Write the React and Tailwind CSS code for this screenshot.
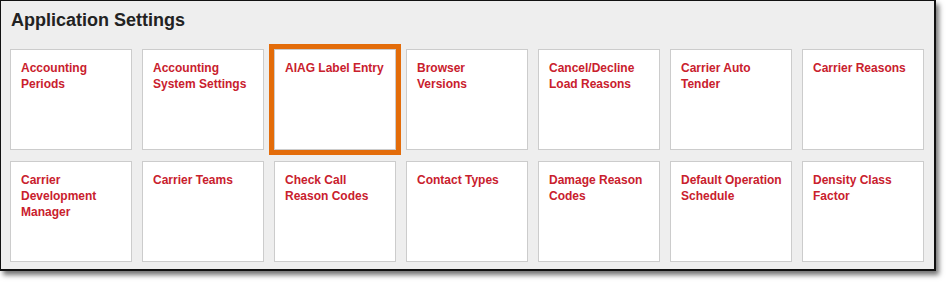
const settings = [
  "Accounting Periods",
  "Accounting System Settings",
  "AIAG Label Entry",
  "Browser Versions",
  "Cancel/Decline Load Reasons",
  "Carrier Auto Tender",
  "Carrier Reasons",
  "Carrier Development Manager",
  "Carrier Teams",
  "Check Call Reason Codes",
  "Contact Types",
  "Damage Reason Codes",
  "Default Operation Schedule",
  "Density Class Factor",
];

// manual breaks so the wrapping matches the screen
const labels = {
  "Accounting Periods": ["Accounting", "Periods"],
  "Accounting System Settings": ["Accounting", "System Settings"],
  "Browser Versions": ["Browser", "Versions"],
  "Cancel/Decline Load Reasons": ["Cancel/Decline", "Load Reasons"],
  "Carrier Auto Tender": ["Carrier Auto", "Tender"],
  "Carrier Development Manager": ["Carrier", "Development", "Manager"],
  "Check Call Reason Codes": ["Check Call", "Reason Codes"],
  "Damage Reason Codes": ["Damage Reason", "Codes"],
  "Default Operation Schedule": ["Default Operation", "Schedule"],
  "Density Class Factor": ["Density Class", "Factor"],
};

function SettingCard({ name, highlighted }) {
  const lines = labels[name] ?? [name];
  return (
    <div
      className={`h-[101px] bg-white border border-[#cccccc] p-2.5 ${
        highlighted ? "outline-[5px] outline-solid outline-[#e36c0a]" : ""
      }`}
    >
      <a className="block text-[12px] leading-4 font-bold text-[#c9202d] cursor-pointer">
        {lines.map((l, i) => (
          <span key={i} className="block whitespace-nowrap">
            {l}
          </span>
        ))}
      </a>
    </div>
  );
}

export default function App() {
  return (
    <div className="w-[951px] h-[286px] bg-white font-['Liberation_Sans',Arial,sans-serif]">
      <div className="w-[936px] h-[271px] bg-[#eeeeee] border-t border-l border-r-2 border-b-2 border-[#111] shadow-[3px_4px_5px_rgba(0,0,0,0.55)] pl-[9px] pr-[10px] pt-2 pb-[7px]">
        <h1 className="text-[18px] leading-[22px] font-bold text-[#222] pl-px">
          Application Settings
        </h1>
        <div className="mt-[18px] grid grid-cols-[repeat(7,122px)] gap-x-[10px] gap-y-[11px]">
          {settings.map((s) => (
            <SettingCard key={s} name={s} highlighted={s === "AIAG Label Entry"} />
          ))}
        </div>
      </div>
    </div>
  );
}
